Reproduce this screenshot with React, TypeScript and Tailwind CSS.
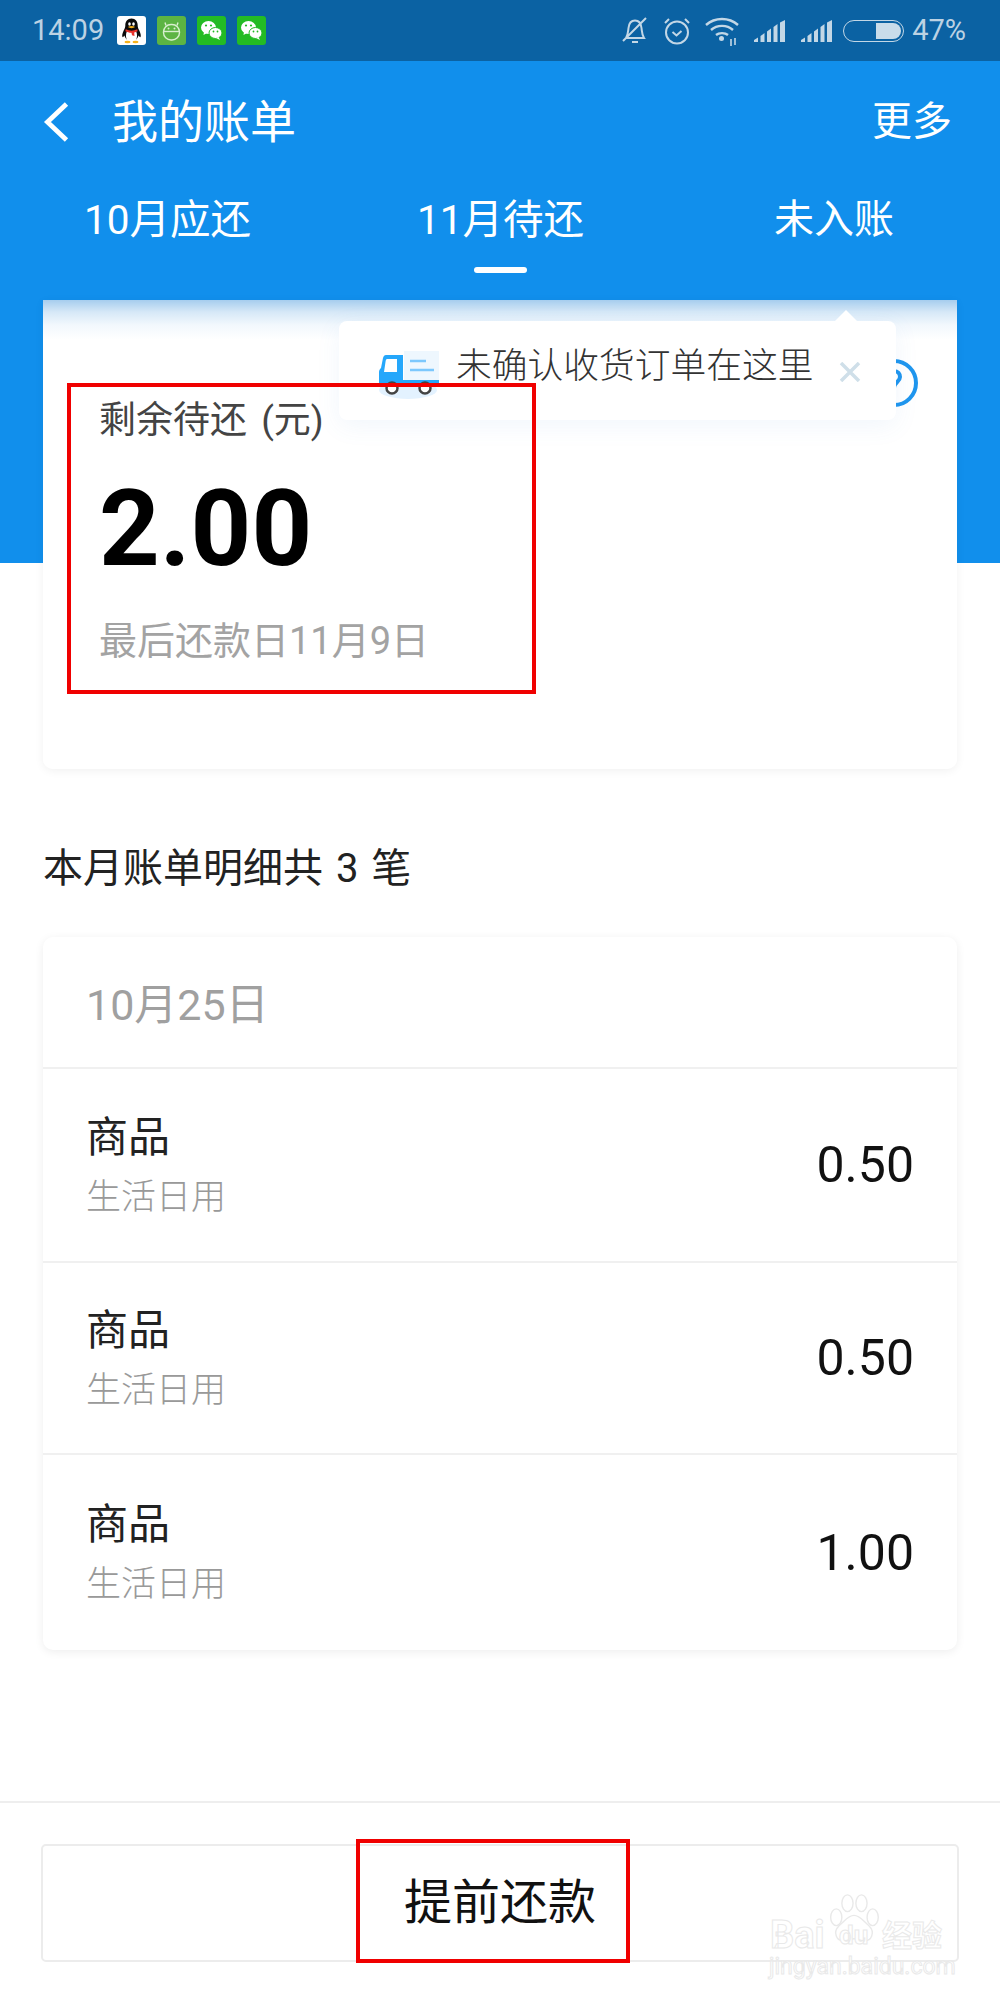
function QqIcon() {
  return (
    <svg viewBox="0 0 29 29" className="h-[29px] w-[29px]">
      <rect width="29" height="29" rx="3" fill="#fff" />
      <path d="M14.5 2.5c-4 0-6.2 3-6.2 7 0 2-.6 3-1.6 5-1.2 2.5-2 5.5-1.2 6.5.5.5 1.3-.5 2-1.5.4 1.600 1.300 3 2.500 4h9c1.200-1 2.100-2.400 2.500-4 .7 1 1.500 2 2 1.500.8-1 0-4-1.200-6.500-1-2-1.600-3-1.600-5 0-4-2.200-7-6.200-7z" fill="#0b0b0b" />
      <path d="M10 15c3 1.500 6 1.500 9 0 1.500 3 1.500 7-.5 10h-8c-2-3-2-7-.5-10z" fill="#fff" />
      <path d="M8.700 13.300c3.800 1.800 7.800 1.800 11.600 0l.3 2c-1 .6-2.200 1-3.400 1.200l.3 3.500-2.500-.8-.5-2.500c-2.300 0-4.500-.6-6.100-1.500z" fill="#e8322b" />
      <ellipse cx="12.5" cy="8" rx="1.3" ry="1.8" fill="#fff" />
      <ellipse cx="16.5" cy="8" rx="1.3" ry="1.8" fill="#fff" />
      <path d="M10.800 11c2.300-1.200 5-1.200 7.400 0-2.200 1.500-5.200 1.500-7.400 0z" fill="#f6b21b" />
      <ellipse cx="10.5" cy="26" rx="3" ry="1.2" fill="#f6b21b" />
      <ellipse cx="18.5" cy="26" rx="3" ry="1.2" fill="#f6b21b" />
    </svg>
  );
}

function BotIcon() {
  return (
    <svg viewBox="0 0 29 29" className="h-[29px] w-[29px]">
      <rect width="29" height="29" rx="3" fill="#5cb443" />
      <g fill="none" stroke="#d8efcf" strokeWidth="1.4">
        <path d="M9 9.500 8 6.500M20 9.500l1-3" />
        <rect x="6.5" y="8.5" width="16" height="15.5" rx="7.5" />
        <path d="M6.500 15.500h16" />
      </g>
      <circle cx="11.5" cy="12.5" r="1" fill="#d8efcf" />
      <circle cx="17.5" cy="12.5" r="1" fill="#d8efcf" />
    </svg>
  );
}

function WechatIcon() {
  return (
    <svg viewBox="0 0 29 29" className="h-[29px] w-[29px]">
      <rect width="29" height="29" rx="3" fill="#23bb24" />
      <ellipse cx="11.5" cy="11.5" rx="7.5" ry="6.5" fill="#fff" />
      <path d="M7 15.500 6.500 19l3.500-2z" fill="#fff" />
      <ellipse cx="18.5" cy="17" rx="6.5" ry="5.5" stroke="#23bb24" strokeWidth="1" fill="#fff" />
      <path d="M21.500 21 23 24l-4-2z" fill="#fff" />
      <circle cx="9" cy="9.5" r="1.1" fill="#23bb24" />
      <circle cx="14" cy="9.5" r="1.1" fill="#23bb24" />
      <circle cx="16.5" cy="15.5" r="0.9" fill="#23bb24" />
      <circle cx="20.5" cy="15.5" r="0.9" fill="#23bb24" />
    </svg>
  );
}

function SignalIcon() {
  return (
    <svg viewBox="0 0 32 22" className="h-[22px] w-[32px]" fill="#c3d7e6">
      <path d="M0 22v-2l4-2.500V22zM6.500 22v-6l4-3v9zM13 22V11.500l4-3V22zM19.500 22V7l4-3v18zM26 22V2.500L31 0v22z" />
    </svg>
  );
}

function StatusBar() {
  return (
    <div className="flex h-[61px] items-center justify-between bg-[#0b62a3] pl-[32px] pr-[34px] text-[29px] text-[#bcd2e3]">
      <div className="flex items-center">
        <span className="mr-[13px] w-[72px]">14:09</span>
        <div className="flex gap-[11px]">
          <QqIcon />
          <BotIcon />
          <WechatIcon />
          <WechatIcon />
        </div>
      </div>
      <div className="flex items-center">
        <svg viewBox="0 0 28 30" className="mr-[13px] h-[30px] w-[28px]" fill="none" stroke="#c3d7e6" strokeWidth="2">
          <path d="M5 22c2-3 2-6 2.500-10C8 7 10.500 4.500 14 4.500c3.500 0 6 2.500 6.500 7.500.5 4 .5 7 2.500 10zM11 26h6M2 25 25 2" />
        </svg>
        <svg viewBox="0 0 30 30" className="mr-[13px] h-[30px] w-[30px]" fill="none" stroke="#c3d7e6" strokeWidth="2">
          <circle cx="15" cy="16.5" r="11" />
          <path d="m10.500 16 4 3.500 5-4.500M3 7l4-4M27 7l-4-4" />
        </svg>
        <svg viewBox="0 0 34 32" className="mr-[15px] h-[32px] w-[34px]" fill="none" stroke="#c3d7e6" strokeWidth="2.4">
          <path d="M1 10c9-8 23-8 32 0M6 15c6-5.500 16-5.500 22 0M11 20c3-2.500 9-2.500 12 0" />
          <circle cx="16.5" cy="23.5" r="2.5" fill="#c3d7e6" stroke="none" />
          <path d="M26 24v7M30 23v7" strokeWidth="1.6" />
        </svg>
        <div className="mr-[15px]">
          <SignalIcon />
        </div>
        <div className="mr-[10px]">
          <SignalIcon />
        </div>
        <div className="mr-[8px] flex h-[22px] w-[61px] justify-end rounded-full border-[1.5px] border-[#c3d7e6] p-[2px]">
          <div className="w-[25px] rounded-r-full bg-[#c9dcea]" />
        </div>
        <span>47%</span>
      </div>
    </div>
  );
}

function TruckIcon() {
  return (
    <svg viewBox="0 0 62 50" className="h-[50px] w-[62px]">
      <ellipse cx="30" cy="40" rx="29" ry="9" fill="#e3f2ff" />
      <rect x="26" y="1" width="35" height="31" fill="#eef7fe" />
      <path d="M8 5h17v31H1V22c0-2 1-3 2-4l2-10c.5-2 1.500-3 3-3z" fill="#25a7fb" />
      <path d="M9 9h10v13H6l1.500-10c.2-2 .7-3 1.500-3z" fill="#fff" />
      <rect x="25" y="30" width="36" height="6" fill="#25a7fb" />
      <path d="M32 11h16M32 20h24" stroke="#7cc8fd" strokeWidth="2.5" />
      <circle cx="14" cy="38" r="5.5" fill="#fff" stroke="#444" strokeWidth="2.5" />
      <circle cx="47" cy="38" r="5.5" fill="#fff" stroke="#444" strokeWidth="2.5" />
    </svg>
  );
}

function SummaryCard() {
  return (
    <section className="relative h-[469px] rounded-b-[10px] bg-[linear-gradient(#a6cdee,#d6e8f7_12px,#f2f8fd_25px,#ffffff_40px)] shadow-[0_2px_10px_rgba(0,0,0,0.06)]">
      {/* help icon, mostly under the tooltip */}
      <svg viewBox="0 0 50 50" className="absolute right-[38px] top-[58px] h-[50px] w-[50px]" fill="none" stroke="#1f96ee" strokeWidth="4">
        <circle cx="25" cy="25" r="22" />
        <path d="M19 19c0-4 3-6 6-6 4 0 6 3 6 6 0 5-6 5-6 11M25 34v4" />
      </svg>

      <div className="absolute left-[296px] top-[21px] flex h-[99px] w-[557px] items-center rounded-[8px] bg-white pl-[39px] shadow-[0_6px_24px_rgba(80,140,220,0.08)]">
        <div className="absolute left-[495px] top-[-11px] h-0 w-0 border-x-[12px] border-b-[12px] border-x-transparent border-b-white" />
        <div className="mt-[8px]">
          <TruckIcon />
        </div>
        <span className="ml-[16px] mt-[-8px] text-[35.75px] font-light leading-none text-[#333]">未确认收货订单在这里</span>
        <svg viewBox="0 0 22 20" className="ml-[25px] mt-[2px] h-[20px] w-[22px]" stroke="#cfdfe9" strokeWidth="3.5">
          <path d="M2 1l18 18M20 1 2 19" />
        </svg>
      </div>

      <div className="flex h-full flex-col pl-[56px]">
        <p className="mt-[101px] text-[37px] leading-[40px] text-[#444] [word-spacing:5px]">剩余待还 (元)</p>
        <p className="mt-[33px] text-[106px] font-bold leading-[110px] text-black">2.00</p>
        <p className="mt-[37px] text-[38px] leading-[40px] text-[#a3a3a3]">最后还款日11月9日</p>
      </div>

      <div className="absolute left-[24px] top-[83px] h-[311px] w-[469px] border-[4px] border-[#f00000]" />
    </section>
  );
}

const rows = [
  { amount: "0.50", h: "h-[194px]" },
  { amount: "0.50", h: "h-[192px]" },
  { amount: "1.00", h: "h-[195px]" },
];

function DetailCard() {
  return (
    <section className="rounded-[10px] bg-white shadow-[0_2px_10px_rgba(0,0,0,0.07)]">
      <div className="flex h-[132px] items-center border-b-2 border-[#f0f0f0] px-[43px] pt-[6px] text-[43px] text-[#a0a0a0]">10月25日</div>
      {rows.map((row, i) => (
        <div key={i} className={`flex items-center justify-between pl-[43px] pr-[43px] ${row.h} ${i < 2 ? "border-b-2 border-[#f0f0f0]" : ""}`}>
          <div>
            <p className="text-[42px] leading-[50px] text-[#222]">商品</p>
            <p className="mt-[15px] text-[35px] font-light leading-[40px] text-[#999]">生活日用</p>
          </div>
          <span className="text-[50px] leading-[60px] text-[#111]">{row.amount}</span>
        </div>
      ))}
    </section>
  );
}

function Watermark() {
  return (
    <div className="pointer-events-none absolute left-[768px] top-[1890px] h-[90px] w-[180px] font-bold text-white [-webkit-text-stroke:1px_#e9e9e9]">
      <svg viewBox="0 0 60 60" className="absolute left-[58px] top-[2px] h-[58px] w-[56px]" fill="#fff" stroke="#e9e9e9" strokeWidth="1.5">
        <ellipse cx="11" cy="26" rx="6" ry="9" />
        <ellipse cx="23" cy="11" rx="6" ry="9" />
        <ellipse cx="38" cy="11" rx="6" ry="9" />
        <ellipse cx="50" cy="26" rx="6" ry="9" />
        <path d="M30 24c6 0 9 5 16 11 7 7 3 17-6 16-4 0-6-2-10-2s-6 2-10 2c-9 1-13-9-6-16 7-6 10-11 16-11z" />
      </svg>
      <span className="absolute left-[2px] top-[26px] text-[38px] leading-[38px]">Bai</span>
      <span className="absolute left-[71px] top-[31px] text-[26px] leading-[28px]">du</span>
      <span className="absolute left-[114px] top-[30px] text-[30px] leading-[32px]">经验</span>
      <p className="absolute left-[1px] top-[64px] whitespace-nowrap text-[23px] font-normal leading-[26px]">jingyan.baidu.com</p>
    </div>
  );
}

export default function App() {
  return (
    <div className="relative flex h-[2000px] w-[1000px] flex-col overflow-hidden bg-white font-['Roboto','Noto_Sans_CJK_SC',sans-serif]">
      <StatusBar />
      <header className="h-[239px] bg-[#118fec] text-white">
        <div className="flex h-[122px] items-center pl-[42px] pr-[48px]">
          <svg viewBox="0 0 28 42" className="h-[40px] w-[28px]" fill="none" stroke="#fff" strokeWidth="5">
            <path d="M25 2 5 21l20 19" />
          </svg>
          <h1 className="ml-[42px] flex-1 text-[46px] font-normal leading-none">我的账单</h1>
          <span className="text-[40px] leading-none">更多</span>
        </div>
        <div className="flex pt-[17px] text-[40.5px] leading-none">
          <div className="w-[333px] pl-[84px]">10月应还</div>
          <div className="relative w-[441px] pl-[84px]">
            11月待还
            <div className="absolute left-[141px] top-[67px] h-[6px] w-[53px] rounded-full bg-white" />
          </div>
          <div className="text-[40px]">未入账</div>
        </div>
      </header>
      <main className="flex-1 bg-[linear-gradient(#118fec_263px,#ffffff_263px)] px-[43px]">
        <SummaryCard />
        <h2 className="mb-[43px] mt-[75px] text-[40px] font-normal leading-[50px] text-[#222] [word-spacing:3px]">本月账单明细共 3 笔</h2>
        <DetailCard />
      </main>
      <footer className="relative h-[199px] border-t-2 border-[#eeeeee] px-[41px] pt-[41px]">
        <button className="h-[118px] w-[918px] rounded-[5px] border-2 border-[#ececec] text-[48px] text-[#111]">提前还款</button>
        <div className="absolute left-[356px] top-[36px] h-[124px] w-[274px] border-[4px] border-[#f00000]" />
      </footer>
      <Watermark />
    </div>
  );
}
